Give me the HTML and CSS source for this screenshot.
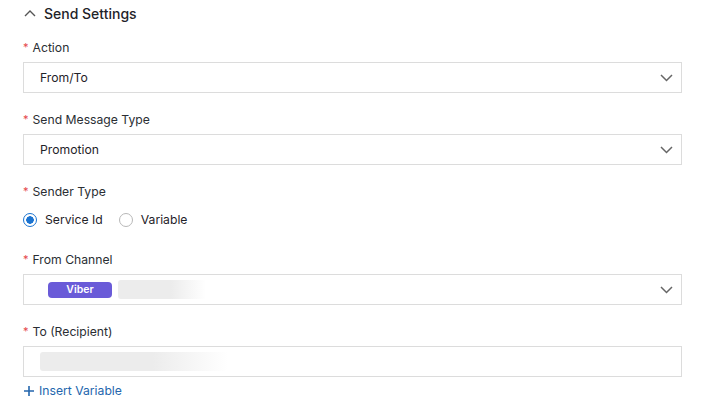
FILE: index.html
```html
<!DOCTYPE html>
<html lang="en">
<head>
    <meta charset="UTF-8">
    <title>Send Settings</title>
    <link rel="stylesheet" href="styles.css">
</head>
<body>
    <div class="panel">
        <div class="panel-head">
            <svg class="chev-up" width="12" height="8" viewBox="0 0 12 8"><path d="M1 7 L6 2 L11 7" fill="none" stroke="#555" stroke-width="1.4"/></svg>
            <span>Send Settings</span>
        </div>

        <div class="field">
            <div class="label"><span class="req">*</span>Action</div>
            <div class="select">
                <span>From/To</span>
                <svg class="chev" width="13" height="8" viewBox="0 0 13 8"><path d="M1 1 L6.5 6.5 L12 1" fill="none" stroke="#666" stroke-width="1.5"/></svg>
            </div>
        </div>

        <div class="field">
            <div class="label"><span class="req">*</span>Send Message Type</div>
            <div class="select">
                <span>Promotion</span>
                <svg class="chev" width="13" height="8" viewBox="0 0 13 8"><path d="M1 1 L6.5 6.5 L12 1" fill="none" stroke="#666" stroke-width="1.5"/></svg>
            </div>
        </div>

        <div class="field">
            <div class="label"><span class="req">*</span>Sender Type</div>
            <div class="radios">
                <label class="radio checked"><span class="dot"></span>Service Id</label>
                <label class="radio"><span class="dot"></span>Variable</label>
            </div>
        </div>

        <div class="field">
            <div class="label"><span class="req">*</span>From Channel</div>
            <div class="select channel">
                <span class="tag">Viber</span>
                <span class="blur short"></span>
                <svg class="chev" width="13" height="8" viewBox="0 0 13 8"><path d="M1 1 L6.5 6.5 L12 1" fill="none" stroke="#666" stroke-width="1.5"/></svg>
            </div>
        </div>

        <div class="field last">
            <div class="label"><span class="req">*</span>To (Recipient)</div>
            <div class="select">
                <span class="blur long"></span>
            </div>
            <a class="insert" href="#">
                <svg width="10" height="10" viewBox="0 0 10 10"><path d="M5 0 V10 M0 5 H10" stroke="#2466ad" stroke-width="1.6"/></svg>
                Insert Variable
            </a>
        </div>
    </div>
</body>
</html>
```

FILE: styles.css
```css
body {
    margin: 0;
    background-color: #ffffff;
    font-family: 'Inter', 'Liberation Sans', sans-serif;
    color: #1f2329;
}
.panel {
    padding: 0 19px 0 23px;
}
.panel-head {
    display: flex;
    align-items: center;
    height: 26px;
    margin-bottom: 11px;
    font-size: 14px;
    font-weight: 500;
}
.chev-up {
    margin: 0 8px 0 1px;
}
.field {
    margin-bottom: 16px;
}
.label {
    display: flex;
    align-items: center;
    height: 20px;
    font-size: 12.2px;
    margin-bottom: 5px;
    color: #2a2e33;
}
.req {
    color: #e5484d;
    margin-right: 4px;
    font-size: 11px;
    line-height: 1;
}
.select {
    height: 31px;
    box-sizing: border-box;
    border: 1px solid #dcdcdc;
    display: flex;
    align-items: center;
    padding: 0 8px 0 16px;
    font-size: 12.2px;
}
.select .chev {
    margin-left: auto;
}
.channel {
    padding-left: 24px;
}
.tag {
    background-color: #6a5bd8;
    color: #ffffff;
    font-size: 10.5px;
    font-weight: 600;
    width: 64px;
    height: 16px;
    line-height: 16px;
    text-align: center;
    border-radius: 4px;
}
.blur {
    height: 19px;
    border-radius: 3px;
    background: linear-gradient(to right, #ececec 60%, #ffffff);
}
.blur.short {
    width: 88px;
    margin-left: 6px;
}
.blur.long {
    width: 188px;
}
.radios {
    display: flex;
    align-items: center;
    height: 27px;
    font-size: 12.2px;
}
.radio {
    display: flex;
    align-items: center;
    margin-right: 16px;
}
.dot {
    width: 14px;
    height: 14px;
    box-sizing: border-box;
    border: 1px solid #b8b8b8;
    border-radius: 50%;
    margin-right: 8px;
}
.radio.checked .dot {
    border: 1.5px solid #1a73d0;
    background: radial-gradient(circle, #1a73d0 3.5px, #ffffff 4px);
}
.last {
    margin-bottom: 0;
}
.insert {
    display: flex;
    align-items: center;
    gap: 5px;
    margin-top: 6px;
    color: #2466ad;
    font-size: 12.2px;
    text-decoration: none;
    padding-left: 1px;
}
```
